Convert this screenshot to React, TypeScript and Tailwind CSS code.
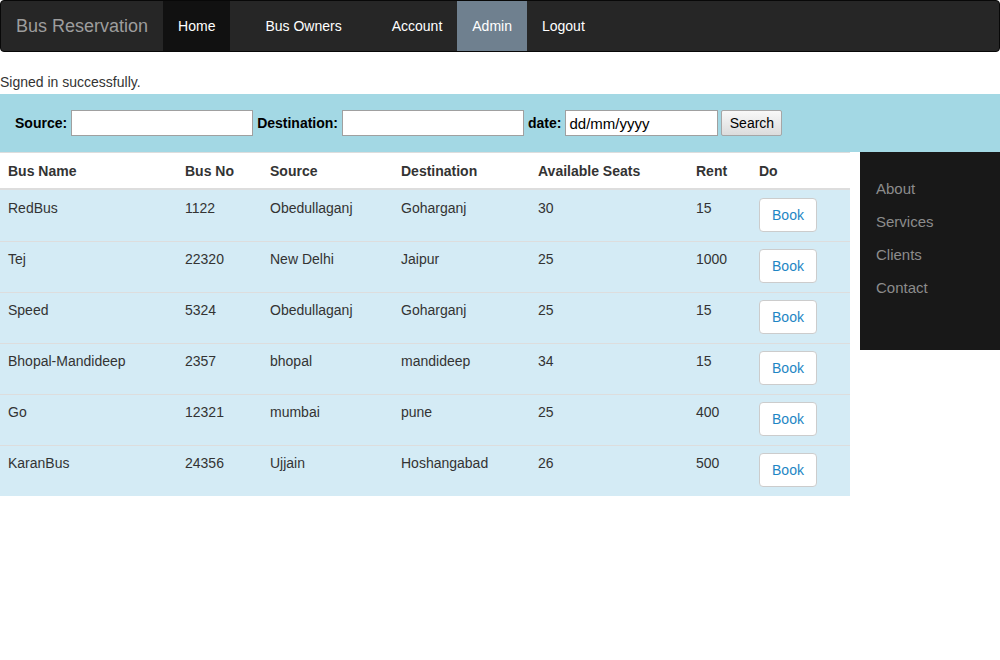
import React from "react";

const rows = [
  ["RedBus", "1122", "Obedullaganj", "Goharganj", "30", "15"],
  ["Tej", "22320", "New Delhi", "Jaipur", "25", "1000"],
  ["Speed", "5324", "Obedullaganj", "Goharganj", "25", "15"],
  ["Bhopal-Mandideep", "2357", "bhopal", "mandideep", "34", "15"],
  ["Go", "12321", "mumbai", "pune", "25", "400"],
  ["KaranBus", "24356", "Ujjain", "Hoshangabad", "26", "500"],
];

const colW = ["w-[177px]", "w-[85px]", "w-[131px]", "w-[137px]", "w-[158px]", "w-[63px]", "w-[99px]"];

export default function App() {
  return (
    <div className="min-h-[660px] bg-white text-[14px] leading-[20px] text-[#333]" style={{ fontFamily: '"Liberation Sans", Arial, sans-serif' }}>
      {/* Navbar */}
      <nav className="flex h-[52px] items-stretch rounded-[4px] border border-[#080808] bg-[#262626]">
        <div className="flex items-center pl-[15px] pr-[15px] text-[18px] text-[#9d9d9d]">Bus Reservation</div>
        <div className="flex items-center bg-[#111111] px-[15px] text-white">Home</div>
        <div className="flex items-center pl-[35px] pr-[35px] text-white">Bus Owners</div>
        <div className="flex items-center px-[15px] text-white">Account</div>
        <div className="flex items-center bg-[#6f808f] px-[15px] text-white">Admin</div>
        <div className="flex items-center px-[15px] text-white">Logout</div>
      </nav>

      <div className="mt-[20px] h-[22px] leading-[20px]">Signed in successfully.</div>

      {/* Search bar */}
      <div className="flex h-[58px] items-center bg-[#a3d8e4] pl-[15px] text-black">
        <label className="font-bold">Source:</label>
        <input className="ml-[4px] h-[26px] w-[182px] border border-[#a0a0a0] bg-white px-1" />
        <label className="ml-[4px] font-bold">Destination:</label>
        <input className="ml-[4px] h-[26px] w-[182px] border border-[#a0a0a0] bg-white px-1" />
        <label className="ml-[4px] font-bold">date:</label>
        <input
          readOnly
          value="dd/mm/yyyy"
          className="ml-[4px] h-[26px] w-[153px] border border-[#a0a0a0] bg-white px-[3px] text-[15px] text-black"
        />
        <button className="ml-[3px] h-[26px] w-[61px] rounded-[2px] border border-[#a6a6a6] bg-gradient-to-b from-[#f8f8f8] to-[#dcdcdc] text-[14px] text-black">
          Search
        </button>
      </div>

      <div className="flex items-start">
        {/* Table */}
        <div className="w-[850px]">
          <div className="flex h-[38px] border-t border-b-2 border-[#dddddd] bg-white font-bold">
            {["Bus Name", "Bus No", "Source", "Destination", "Available Seats", "Rent", "Do"].map((h, i) => (
              <div key={h} className={`${colW[i]} px-[8px] pt-[8px]`}>{h}</div>
            ))}
          </div>
          {rows.map((r, ri) => (
            <div key={ri} className={`flex h-[51px] bg-[#d4ebf5] ${ri > 0 ? "border-t border-[#dddddd]" : ""}`}>
              {r.map((c, i) => (
                <div key={i} className={`${colW[i]} px-[8px] ${ri > 0 ? "pt-[7px]" : "pt-[8px]"}`}>{c}</div>
              ))}
              <div className={`${colW[6]} px-[8px] ${ri > 0 ? "pt-[7px]" : "pt-[8px]"}`}>
                <button className="h-[34px] w-[58px] rounded-[4px] border border-[#cccccc] bg-white text-[14px] text-[#1e86c4]">
                  Book
                </button>
              </div>
            </div>
          ))}
        </div>

        {/* Sidebar */}
        <div className="ml-[10px] flex h-[198px] w-[140px] flex-col bg-[#181818] pl-[16px] pt-[20px] text-[15px] leading-[33px] text-[#8c8c8c]">
          <div>About</div>
          <div>Services</div>
          <div>Clients</div>
          <div>Contact</div>
        </div>
      </div>
    </div>
  );
}
